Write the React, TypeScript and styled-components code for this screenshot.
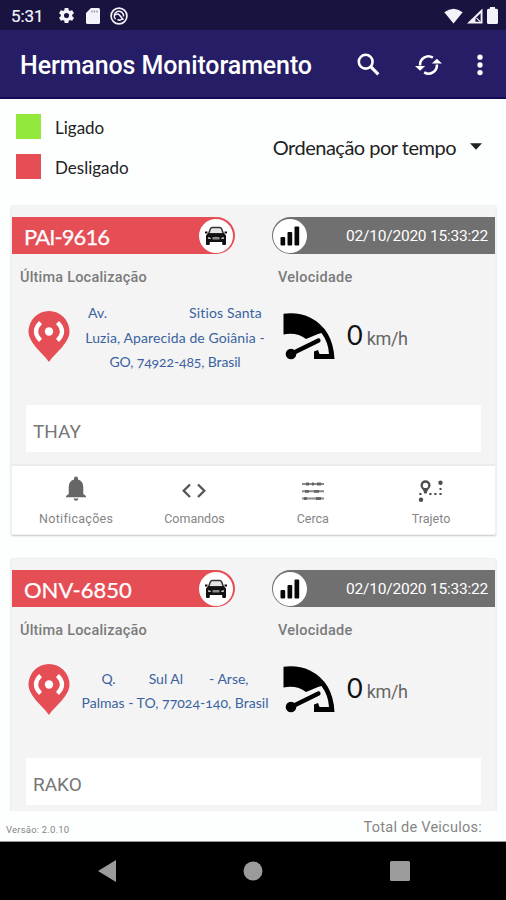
import React from "react";
import styled, { createGlobalStyle } from "styled-components";

const GlobalStyle = createGlobalStyle`
  *, *::before, *::after { box-sizing: border-box; }
  html, body { margin: 0; padding: 0; background: #fdfffe; }
  body { font-family: Roboto, sans-serif; }
  svg { display: block; flex: none; }
`;

const Screen = styled.div`
  width: 506px;
  height: 900px;
  display: flex;
  flex-direction: column;
  overflow: hidden;
  background: #fdfffe;
`;

/* Text run whose tracking is set per label */
const Label = styled.span<{ $track?: number }>`
  letter-spacing: ${(p) => p.$track ?? 0}px;
  white-space: pre;
`;

const StatusBar = styled.header`
  height: 30px;
  flex: none;
  display: flex;
  align-items: center;
  justify-content: space-between;
  padding: 1px 8px 0 11px;
  background: #191340;
  color: #f4f3fa;
  font-size: 17px;
`;

const StatusGroup = styled.div<{ $gap: number }>`
  display: flex;
  align-items: center;
  gap: ${(p) => p.$gap}px;
`;

const Clock = styled.span`
  width: 36px;
  letter-spacing: -0.1px;
  -webkit-text-stroke: 0.2px currentColor;
`;

const AppBar = styled.div`
  height: 69px;
  flex: none;
  display: flex;
  align-items: center;
  padding: 4px 23px 0 20px;
  background: #251d66;
  border-bottom: 2px solid #140c5a;
`;

const Title = styled.h1`
  margin: 0;
  flex: 1;
  color: #fff;
  font-size: 25px;
  font-weight: 500;
  letter-spacing: -0.1px;
  white-space: nowrap;
`;

const Actions = styled.div`
  display: flex;
  align-items: center;
  margin-top: -2px;
`;

const Spacer = styled.span<{ $size: number }>`
  width: ${(p) => p.$size}px;
`;

const Filters = styled.section`
  height: 106px;
  flex: none;
  display: flex;
  justify-content: space-between;
  padding: 15px 24px 0 16px;
  font-family: Lato, sans-serif;
  color: #222;
`;

const Legend = styled.ul`
  list-style: none;
  margin: 0;
  padding: 0;
  display: flex;
  flex-direction: column;
  gap: 15px;
`;

const LegendItem = styled.li<{ $color: string }>`
  display: flex;
  align-items: center;
  gap: 14px;
  height: 25px;
  font-size: 17px;
  line-height: 25px;

  &::before {
    content: "";
    width: 25px;
    height: 25px;
    background: ${(p) => p.$color};
  }

  span { padding-top: 2px; }
`;

const SortSelect = styled.div`
  display: flex;
  align-items: center;
  gap: 14px;
  height: 65px;
  font-size: 20px;
`;

const List = styled.main`
  height: 606px;
  flex: none;
  overflow: hidden;
  display: flex;
  flex-direction: column;
  gap: 23px;
  padding: 0 10px 0 11px;
`;

const Card = styled.article`
  height: 330px;
  flex: none;
  background: #f4f4f4;
  border: 1px solid #f0f1f1;
  border-radius: 2px;
  box-shadow: 0 1px 2px rgba(0, 0, 0, 0.22);
  display: flex;
  flex-direction: column;
`;

const CardTop = styled.div`
  height: 37px;
  margin-top: 11px;
  display: flex;
  justify-content: space-between;
`;

const Strip = styled.div<{ $kind: "plate" | "date" }>`
  width: 223px;
  height: 37px;
  display: flex;
  align-items: center;
  justify-content: space-between;
  color: #fff;
  background: ${(p) => (p.$kind === "plate" ? "#e54e55" : "#707070")};
  border-radius: ${(p) => (p.$kind === "plate" ? "0 19px 19px 0" : "19px 0 0 19px")};
  padding: ${(p) => (p.$kind === "plate" ? "0 2px 0 12px" : "0 7px 0 1px")};
  font-family: ${(p) => (p.$kind === "plate" ? "Lato" : "Roboto")}, sans-serif;
  font-size: ${(p) => (p.$kind === "plate" ? 22 : 15.5)}px;
  -webkit-text-stroke: ${(p) => (p.$kind === "plate" ? "0.25px" : "0")} #fff;

  > span:not(:has(svg)) { padding-top: ${(p) => (p.$kind === "plate" ? 2 : 1)}px; }
`;

const Disc = styled.span`
  width: 34px;
  height: 34px;
  border-radius: 50%;
  background: #fff;
  display: flex;
  align-items: center;
  justify-content: center;
`;

const Columns = styled.div`
  display: grid;
  grid-template-columns: 258px 1fr;
  padding-left: 8px;
`;

const Heading = styled.h2`
  margin: 0;
  padding-top: 15px;
  height: 37px;
  font-size: 14.5px;
  line-height: 18px;
  font-weight: 500;
  color: #7b7b7b;
`;

const InfoRow = styled.div<{ $inset: number }>`
  height: 90px;
  display: flex;
  align-items: center;
  padding-left: ${(p) => p.$inset}px;
`;

const Address = styled.p`
  margin: 0 0 0 10px;
  width: 190px;
  display: flex;
  flex-direction: column;
  align-items: center;
  font-family: Lato, sans-serif;
  font-variant-numeric: oldstyle-nums;
  font-size: 14px;
  line-height: 24.5px;
  color: #3a62a0;
  padding-top: 4px;
`;

const AddressLine = styled.span`
  display: flex;
`;

const Piece = styled.span<{ $gap?: number; $track?: number }>`
  margin-left: ${(p) => p.$gap ?? 0}px;
  letter-spacing: ${(p) => p.$track ?? 0}px;
  white-space: pre;
`;

const Speed = styled.div`
  display: flex;
  align-items: baseline;
  gap: 4px;
  margin: -2px 0 0 12px;
  color: #666;
  font-size: 18px;

  strong {
    font-family: Lato, sans-serif;
    font-weight: 400;
    font-size: 27px;
    line-height: 30px;
    color: #111;
  }
`;

const Driver = styled.div`
  margin: 24px 14px 0;
  height: 47px;
  flex: none;
  background: #fff;
  padding: 5px 7px 0;
  display: flex;
  align-items: center;
  font-size: 19px;
  color: #777;
`;

const Tabs = styled.nav`
  margin-top: auto;
  height: 70px;
  flex: none;
  background: #fff;
  border-top: 2px solid #ebebeb;
  display: grid;
  grid-template-columns: repeat(4, 118.3px);
  padding-left: 5px;
`;

const Tab = styled.div`
  display: flex;
  flex-direction: column;
  align-items: center;
  padding-top: 10px;
  gap: 9px;
  font-size: 12.5px;
  line-height: 16px;
  color: #858585;
`;

const Footer = styled.footer`
  height: 31px;
  flex: none;
  display: flex;
  justify-content: space-between;
  padding: 0 24px 0 6px;
  color: #858585;
  border-bottom: 1px solid #999;
`;

const Version = styled.span`
  font-size: 9.5px;
  line-height: 38px;
  letter-spacing: 0.2px;
`;

const Total = styled.span`
  font-size: 14.5px;
  line-height: 33px;
`;

const NavBar = styled.div`
  height: 58px;
  flex: none;
  background: #000;
  display: grid;
  grid-template-columns: repeat(3, 146.5px);
  justify-content: center;
  justify-items: center;
  align-items: center;
`;

const GearIcon = () => (
  <svg width="19" height="19" viewBox="0 0 24 24" fill="currentColor">
    <path d="M19.14 12.94c.04-.3.06-.61.06-.94s-.02-.64-.07-.94l2.03-1.58a.49.49 0 0 0 .12-.61l-1.92-3.32a.49.49 0 0 0-.59-.22l-2.39.96a7 7 0 0 0-1.62-.94l-.36-2.54A.48.48 0 0 0 13.92 2.4h-3.84a.48.48 0 0 0-.47.41l-.36 2.54a7.3 7.3 0 0 0-1.62.94l-2.39-.96a.48.48 0 0 0-.59.22L2.74 8.87a.48.48 0 0 0 .12.61l2.03 1.58a6 6 0 0 0 0 1.88l-2.03 1.58a.49.49 0 0 0-.12.61l1.92 3.32c.12.22.37.29.59.22l2.39-.96c.5.38 1.03.7 1.62.94l.36 2.54c.05.24.24.41.48.41h3.84c.24 0 .44-.17.47-.41l.36-2.54a7 7 0 0 0 1.62-.94l2.39.96c.22.08.47 0 .59-.22l1.92-3.32a.48.48 0 0 0-.12-.61zM12 15.2a3.2 3.2 0 1 1 0-6.4 3.2 3.2 0 0 1 0 6.4z" />
  </svg>
);

const SdIcon = () => (
  <svg width="14" height="16" viewBox="0 0 14 16">
    <path d="M5 0h7.500Q14 0 14 1.500v13q0 1.500-1.500 1.500h-11Q0 16 0 14.500V5z" fill="currentColor" />
    <path d="M6 2.500v2M8.500 2.500v2M11 2.500v2" stroke="#8f8ba3" strokeWidth="1.200" />
  </svg>
);

const SyncDisabledIcon = () => (
  <svg width="18" height="18" viewBox="0 0 18 18" fill="none" stroke="currentColor">
    <circle cx="9" cy="9" r="7.900" strokeWidth="1.700" />
    <path d="M5.500 12.200A4.700 4.700 0 1 1 13.600 9.500" strokeWidth="1.500" />
    <path d="M5.200 8.200q2.300-2.400 4.200-.2l4 4.700M7.500 12.500q2.500 1.500 4.500-.5" strokeWidth="1.600" />
  </svg>
);

const WifiIcon = () => (
  <svg width="19" height="16" viewBox="0 0 20 16" fill="currentColor">
    <path d="M0.300 4Q10-3.400 19.700 4L10 16z" />
  </svg>
);

const CellIcon = () => (
  <svg width="16" height="16" viewBox="0 0 17 16">
    <path d="M16.500 0v16H0z" fill="currentColor" />
    <path d="M14.500 5v9H9V10.500z" fill="#191340" />
    <path d="m10 10 4 4" stroke="currentColor" strokeWidth="1.300" />
  </svg>
);

const BatteryIcon = () => (
  <svg width="11" height="17" viewBox="0 0 11 17" fill="currentColor">
    <path d="M3 0h5v1.800h1.500Q11 1.800 11 3.300v12.200Q11 17 9.500 17h-8Q0 17 0 15.500V3.300Q0 1.800 1.500 1.800H3z" />
  </svg>
);

const SearchIcon = () => (
  <svg width="23" height="23" viewBox="0 0 23 23" fill="none" stroke="#fff">
    <circle cx="8.700" cy="8.700" r="6.900" strokeWidth="2.600" />
    <path d="m13.700 13.700 7.600 7.600" strokeWidth="3.200" />
  </svg>
);

const RefreshIcon = () => (
  <svg width="27" height="22" viewBox="0 0 28 22">
    <g fill="none" stroke="#fff" strokeWidth="2.600">
      <path d="M5.300 11.500A8.700 8.700 0 0 1 18.500 3.400" />
      <path d="M22.700 10.500A8.700 8.700 0 0 1 9.500 18.600" />
    </g>
    <path d="M0 12h10.600l-5.300 5zM17.400 9.500H28l-5.300-5z" fill="#fff" />
  </svg>
);

const MoreIcon = () => (
  <svg width="6" height="22" viewBox="0 0 6 22" fill="#fff">
    <circle cx="3" cy="3.200" r="2.650" />
    <circle cx="3" cy="11" r="2.650" />
    <circle cx="3" cy="18.600" r="2.650" />
  </svg>
);

const CarIcon = () => (
  <svg width="24" height="20" viewBox="0 0 24 20">
    <path d="M4.500 8 6.300 3Q6.900 1.600 8.300 1.600h7.400q1.400 0 2 1.400L19.500 8z" fill="#e4e4e4" stroke="#333" strokeWidth="1.500" />
    <path d="M4 7.200h16l2 2.400V18q0 1-1 1h-1.800q-1 0-1-1v-2H5.800v2q0 1-1 1H3q-1 0-1-1V9.600z" fill="#111" />
    <path d="M1 6.500h2.500M20.500 6.500H23" stroke="#111" strokeWidth="2" />
    <path d="M4 11.300q2-.2 3.200 1.400L4.300 13zM20 11.300q-2-.2-3.200 1.400l2.900.3z" fill="#ddd" />
    <path d="M8.500 11h7v2.500h-7z" fill="#8b8b8b" />
  </svg>
);

const BarsIcon = () => (
  <svg width="20" height="20" viewBox="0 0 20 20" fill="#080808">
    <rect x="0.500" y="11" width="4.700" height="8.500" rx="1" />
    <rect x="7.500" y="6" width="4.700" height="13.500" rx="1" />
    <rect x="14.500" y="0.500" width="4.700" height="19" rx="1" />
  </svg>
);

const PinIcon = () => (
  <svg width="42" height="51" viewBox="0 0 42 51">
    <path d="M21 51C17 44 0.500 32.500 0.500 20.500a20.500 20.500 0 0 1 41 0C41.500 32.500 25 44 21 51z" fill="#e54e55" />
    <circle cx="21" cy="20.500" r="4.200" fill="#fff" />
    <path d="M12.500 11.500q-9 9 0 18M29.500 11.500q9 9 0 18" fill="none" stroke="#fff" strokeWidth="4.200" />
  </svg>
);

const GaugeIcon = () => (
  <svg width="52" height="47" viewBox="0 0 52 47">
    <path d="M.5.800Q15-1 27 4.500 50 16 51.500 46H31v-7.500l4-1.500 1.500 4H46Q45.500 29.500 38.500 20L35 21l-12 5Q14 19 .5 21.500z" fill="#000" />
    <path d="M8 41 35.500 27.500" stroke="#000" strokeWidth="4.200" strokeLinecap="round" />
    <circle cx="8" cy="41" r="5.300" fill="#000" />
  </svg>
);

const BellIcon = () => (
  <svg width="22" height="26" viewBox="0 0 22 26" fill="#666">
    <path d="M11 .5q2 0 2 2v1Q18.300 5 18.300 11v7l2.700 2v1.200H1V20l2.700-2v-7Q3.700 5 9 3.500v-1q0-2 2-2zM8.500 22.500h5q-.5 2.200-2.500 2.200t-2.500-2.200z" />
  </svg>
);

const CodeIcon = () => (
  <svg width="26" height="26" viewBox="0 0 26 26" fill="none" stroke="#555" strokeWidth="2.300">
    <path d="m9 8.500-6.300 6.300L9 21M17 8.500l6.300 6.300L17 21" />
  </svg>
);

const FenceIcon = () => (
  <svg width="24" height="26" viewBox="0 0 24 26">
    <path d="M1 8h22M1 15.300h22M1 22.500h22" stroke="#888" strokeWidth="2" />
    <path d="M5 8h3M11 8h2M16 8h4M4 15.300h4M13 15.300h5M3 22.500h3M15 22.500h5" stroke="#666" strokeWidth="2.800" />
  </svg>
);

const RouteIcon = () => (
  <svg width="28" height="26" viewBox="0 0 28 26" fill="#4d4d4d">
    <path fillRule="evenodd" d="M8.500 4.200a5 5 0 0 1 5 5c0 3-3.500 4.500-3.700 8.300H7.200C7 13.700 3.500 12.200 3.500 9.200a5 5 0 0 1 5-5zm0 2.500a2.700 2.700 0 1 0 0 5.400 2.700 2.700 0 0 0 0-5.400z" />
    <circle cx="23.500" cy="6.800" r="2.200" />
    <circle cx="4" cy="23.700" r="2.200" />
    <path d="M2.300 17h2.200v2H2.300zM12.300 17h2.200v2h-2.200zM17.300 17h2.200v2h-2.200zM22.400 17h2.200v2h-2.200zM22.500 12h2v2h-2z" />
  </svg>
);

type Run = { text: string; gap?: number; track?: number };
type Vehicle = {
  plate: string;
  track: number;
  driver: string;
  address: Run[][];
  showTabs: boolean;
};

const vehicles: Vehicle[] = [
  {
    plate: "PAI-9616",
    track: -0.9,
    driver: "THAY",
    showTabs: true,
    address: [
      [{ text: "Av." }, { text: "Sitios Santa", gap: 82, track: 0.15 }],
      [{ text: "Luzia, Aparecida de Goiânia -", track: 0.1 }],
      [{ text: "GO, 74922-485, Brasil", track: -0.13 }],
    ],
  },
  {
    plate: "ONV-6850",
    track: 0,
    driver: "RAKO",
    showTabs: false,
    address: [
      [{ text: "Q." }, { text: "Sul Al", gap: 33 }, { text: "- Arse,", gap: 26 }],
      [{ text: "Palmas - TO, 77024-140, Brasil", track: 0.02 }],
    ],
  },
];

const tabs = [
  { name: "Notificações", track: 0.3, icon: <BellIcon /> },
  { name: "Comandos", track: 0, icon: <CodeIcon /> },
  { name: "Cerca", track: 0, icon: <FenceIcon /> },
  { name: "Trajeto", track: 0, icon: <RouteIcon /> },
];

function VehicleCard({ vehicle }: { vehicle: Vehicle }) {
  return (
    <Card>
      <CardTop>
        <Strip $kind="plate">
          <Label $track={vehicle.track}>{vehicle.plate}</Label>
          <Disc><CarIcon /></Disc>
        </Strip>
        <Strip $kind="date">
          <Disc><BarsIcon /></Disc>
          <Label $track={-0.22}>02/10/2020 15:33:22</Label>
        </Strip>
      </CardTop>
      <Columns>
        <Heading><Label $track={0.2}>Última Localização</Label></Heading>
        <Heading><Label $track={0.25}>Velocidade</Label></Heading>
        <InfoRow $inset={8}>
          <PinIcon />
          <Address>
            {vehicle.address.map((line, i) => (
              <AddressLine key={i}>
                {line.map((run) => (
                  <Piece key={run.text} $gap={run.gap} $track={run.track}>{run.text}</Piece>
                ))}
              </AddressLine>
            ))}
          </Address>
        </InfoRow>
        <InfoRow $inset={5}>
          <GaugeIcon />
          <Speed><strong>0</strong><Label $track={-0.35}>km/h</Label></Speed>
        </InfoRow>
      </Columns>
      <Driver><Label>{vehicle.driver}</Label></Driver>
      {vehicle.showTabs && (
        <Tabs>
          {tabs.map((tab) => (
            <Tab key={tab.name}>
              {tab.icon}
              <Label $track={tab.track}>{tab.name}</Label>
            </Tab>
          ))}
        </Tabs>
      )}
    </Card>
  );
}

export default function App() {
  return (
    <>
      <GlobalStyle />
      <Screen>
        <StatusBar>
          <StatusGroup $gap={10}>
            <Clock>5:31</Clock>
            <GearIcon />
            <SdIcon />
            <SyncDisabledIcon />
          </StatusGroup>
          <StatusGroup $gap={4}>
            <WifiIcon />
            <CellIcon />
            <BatteryIcon />
          </StatusGroup>
        </StatusBar>
        <AppBar>
          <Title>Hermanos Monitoramento</Title>
          <Actions>
            <SearchIcon />
            <Spacer $size={35} />
            <RefreshIcon />
            <Spacer $size={35} />
            <MoreIcon />
          </Actions>
        </AppBar>
        <Filters>
          <Legend>
            <LegendItem $color="#92e83b"><Label>Ligado</Label></LegendItem>
            <LegendItem $color="#e54e55"><Label>Desligado</Label></LegendItem>
          </Legend>
          <SortSelect>
            <Label $track={-0.5}>Ordenação por tempo</Label>
            <svg width="12" height="7" viewBox="0 0 13 7"><path d="M0 0h13L6.500 7z" fill="#222" /></svg>
          </SortSelect>
        </Filters>
        <List>
          {vehicles.map((v) => <VehicleCard key={v.plate} vehicle={v} />)}
        </List>
        <Footer>
          <Version>Versão: 2.0.10</Version>
          <Total><Label $track={0.25}>Total de Veiculos:</Label></Total>
        </Footer>
        <NavBar>
          <svg width="18" height="22" viewBox="0 0 18 22"><path d="M18 0v22L0 11z" fill="#9b9b9b" /></svg>
          <svg width="20" height="20" viewBox="0 0 20 20"><circle cx="10" cy="10" r="9.500" fill="#9b9b9b" /></svg>
          <svg width="20" height="20" viewBox="0 0 20 20"><rect width="20" height="20" rx="1.500" fill="#9b9b9b" /></svg>
        </NavBar>
      </Screen>
    </>
  );
}
